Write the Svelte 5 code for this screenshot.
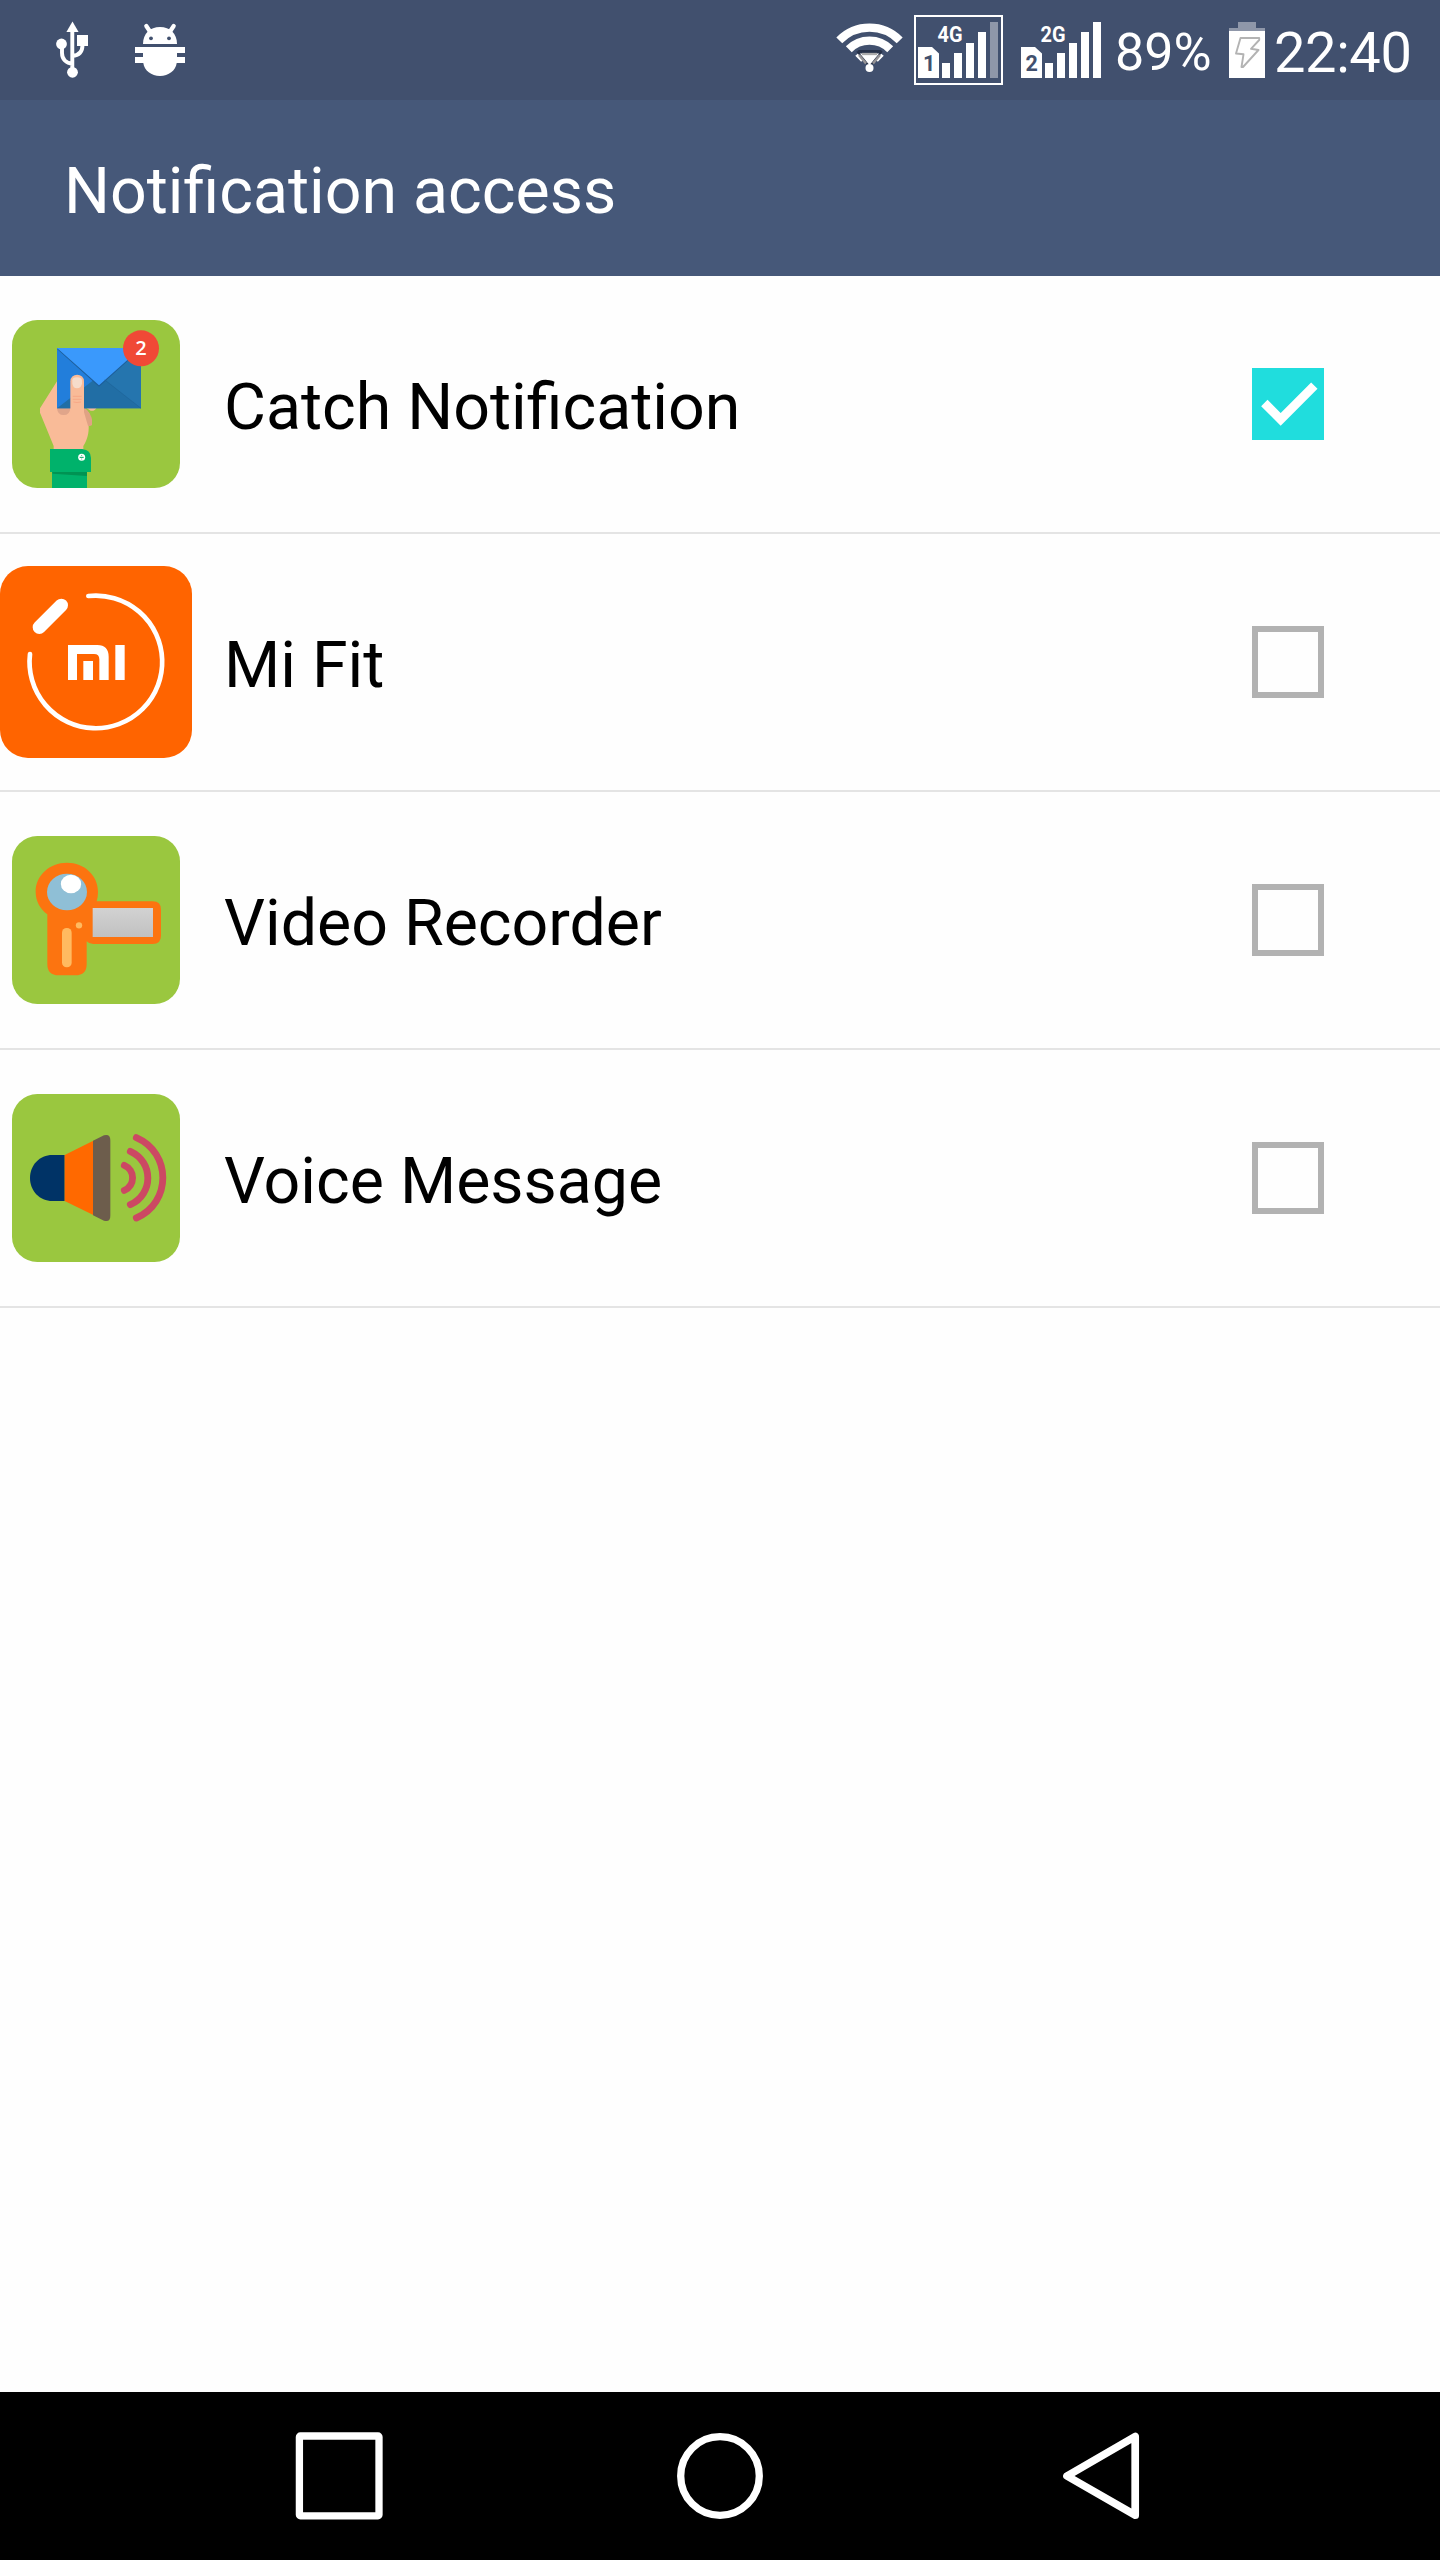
<script>
  let apps = $state([
    { name: 'Catch Notification', icon: 'catch', checked: true },
    { name: 'Mi Fit', icon: 'mi', checked: false },
    { name: 'Video Recorder', icon: 'video', checked: false },
    { name: 'Voice Message', icon: 'voice', checked: false }
  ]);
</script>

{#snippet sim(slot, network, full)}
  <svg class="sim" width="89" height="70" viewBox="0 0 89 70">
    {#if !full}
      <rect x="1" y="1" width="87" height="68" fill="none" stroke="#fff" stroke-width="2" />
    {/if}
    <path d="M4 32H18L25 38.5V63H4Z" fill="#fff" />
    <text x={slot === '1' ? 9 : 8.5} y="55.5" class="slot">{slot}</text>
    <text x="23.5" y="26.5" class="network" textLength="25" lengthAdjust="spacingAndGlyphs">{network}</text>
    <path d="M28 48h8v15h-8zM40 38h8v25h-8zM52 28h8v35h-8zM64 17h8v46h-8z" fill="#fff" />
    <path d="M76 7h8v56h-8z" fill={full ? '#fff' : '#8f97a9'} />
  </svg>
{/snippet}

<div class="screen">
  <div class="status">
    <svg class="usb" width="40" height="64" viewBox="52 18 40 64">
      <path d="M72.5 21.5L78.6 32H66.4Z" fill="#fff" />
      <path d="M72.3 31V72M62 46v7c0 6 4 10.500 10.300 10.500M82.500 45c0 7-3.500 10.500-10.200 11" fill="none" stroke="#fff" stroke-width="3.900" />
      <circle cx="72.500" cy="72.300" r="5.400" fill="#fff" />
      <circle cx="61.500" cy="44" r="5.400" fill="#fff" />
      <path d="M77 35h11v11H77z" fill="#fff" />
    </svg>
    <svg class="bug" width="54" height="64" viewBox="133 18 54 64">
      <path d="M143 44c0-10.500 7-17 17-17s17 6.500 17 17z" fill="#fff" />
      <path d="M146.300 26l5 7.500M173.700 26l-5 7.500" stroke="#fff" stroke-width="4.200" stroke-linecap="round" />
      <circle cx="151" cy="38.300" r="1.900" fill="#41506e" />
      <circle cx="169" cy="38.300" r="1.900" fill="#41506e" />
      <path d="M135 47h50v6h-8v4h8v6h-8.300c-1 7.500-8 13-16.700 13s-15.700-5.500-16.700-13H135v-6h8v-4h-8z" fill="#fff" />
    </svg>
    <div class="spacer"></div>
    <svg class="wifi" width="71" height="52" viewBox="834 22 71 52">
      <g fill="none" stroke="#fff" stroke-width="8.300">
        <path d="M839.300 40.300A42.300 42.300 0 0 1 899.700 40.300" />
        <path d="M848.800 49.300A29.200 29.200 0 0 1 890.200 49.300" />
        <path d="M858.200 58.700A16 16 0 0 1 880.800 58.700" />
      </g>
      <path d="M858 52.500L869.500 66.500L881 52.500Z" fill="#fff" stroke="#28334a" stroke-width="1.800" />
      <path d="M859 51.500H880.500" stroke="#28334a" stroke-width="3" stroke-linecap="round" />
      <path d="M862 54h15" stroke="#aaa" stroke-width="2.300" />
      <path d="M859 55l7 8.500M880 55l-7 8.500" stroke="#969496" stroke-width="2.400" />
      <circle cx="869.500" cy="68" r="4" fill="#fff" />
    </svg>
    {@render sim('1', '4G', false)}
    {@render sim('2', '2G', true)}
    <span class="percent">89%</span>
    <svg class="battery" width="36" height="56" viewBox="0 0 36 56">
      <path d="M9 0h18v6h9v3H0V6h9z" fill="#8f97a9" />
      <path d="M0 9h36v47H0z" fill="#fff" />
      <path d="M11.500 16H30.200V18L22 26.800L29.500 28L14 45H12.500L14.500 32.300L7 31.500Z" fill="none" stroke="#b3b3b3" stroke-width="1.900" stroke-linejoin="round" />
    </svg>
    <span class="clock">22:40</span>
  </div>

  <header>Notification access</header>

  <main>
    {#each apps as app}
      <label class="row">
        <span class="icon">
          {#if app.icon === 'catch'}
            <svg width="168" height="168" viewBox="36 60 504 504">
              <rect x="36" y="60" width="504" height="504" rx="76" fill="#9ac73f" />
              <path d="M171 244L120 325V338L161 438V450H250V438C262 420 267 400 266 376L268 340L250 322L171 322Z" fill="#f9bb98" />
              <path d="M250 322C262 328 272 342 276 358V375Q270 380 264 377L250 330Z" fill="#e0a284" />
              <path d="M258 323H290Q284 334 272 332Z" fill="#f9bb98" />
              <path d="M171 323H211Q210 345 191 345T171 323Z" fill="#e0a58a" />
              <path d="M171 144H423V325H171Z" fill="#2575ae" />
              <path d="M171 325L280 238H314L423 325Z" fill="#216ea5" />
              <path d="M171 144V325L282 239Z" fill="#227edb" />
              <path d="M171 147L297 260L423 147Z" fill="#1d5d99" />
              <path d="M171 144H423L297 256Z" fill="#3a99fc" />
              <path d="M314 240L423 325" stroke="#1e659a" stroke-width="2" />
              <path d="M211 340V244a20.500 20 0 0 1 41 0V340Z" fill="#f9bb98" />
              <path d="M217 241Q217 232 231 232T246 241V250Q244 265 231 265T217 250Z" fill="#f6dccb" />
              <path d="M218 289H245M218 298H245M220 306Q231 309 243 306" fill="none" stroke="#f7a583" stroke-width="2.500" />
              <circle cx="423" cy="145" r="54" fill="#f04936" />
              <text class="badge" x="423" y="165" text-anchor="middle">2</text>
              <path d="M156 510H261V564H156Z" fill="#00b26b" />
              <path d="M156 514H261V528L158 521Z" fill="#009353" />
              <path d="M150 447H247Q273 450 273 474V516H150Z" fill="#00b26b" />
              <circle cx="245" cy="472" r="10.500" fill="#fff" />
              <path d="M239 472h12M245 466v2M245 476v2" stroke="#00a562" stroke-width="3" />
            </svg>
          {:else if app.icon === 'mi'}
            <svg width="192" height="192" viewBox="0 48 576 576">
              <rect x="0" y="48" width="576" height="576" rx="84" fill="#ff6400" />
              <path d="M265 138A199 199 0 1 1 90 312" fill="none" stroke="#fff" stroke-width="14" stroke-linecap="round" />
              <path d="M118 232L184 166" stroke="#fff" stroke-width="40" stroke-linecap="round" />
              <path d="M204 285H292Q326 286 326 320V390H298V328Q298 312 282 312H231V390H204ZM250 333H279V390H250ZM346 285H374V390H346Z" fill="#fff" />
            </svg>
          {:else if app.icon === 'video'}
            <svg width="168" height="168" viewBox="36 48 504 504">
              <defs>
                <linearGradient id="lcd" x1="0" y1="0" x2="0" y2="1">
                  <stop offset="0" stop-color="#d2d2d2" />
                  <stop offset="1" stop-color="#c1c1c1" />
                </linearGradient>
              </defs>
              <rect x="36" y="48" width="504" height="504" rx="76" fill="#9ac73f" />
              <path d="M142 283C120 266 107 243 107 215C107 166 149 128 201 128S294 166 294 215Q294 230 290 244H458Q483 244 483 269V347Q483 372 458 372H280Q267 372 260 364V432Q260 466 226 466H176Q142 466 142 432Z" fill="#fc7410" />
              <ellipse cx="201" cy="216" rx="60" ry="55" fill="#8fbfd6" />
              <ellipse cx="213" cy="192" rx="30.500" ry="28" fill="#fff" />
              <rect x="278" y="264" width="181" height="87" fill="url(#lcd)" />
              <circle cx="237" cy="316" r="9.500" fill="#ffba60" />
              <rect x="186" y="324" width="29" height="118" rx="14" fill="#ffba60" />
            </svg>
          {:else}
            <svg width="168" height="168" viewBox="36 42 504 504">
              <rect x="36" y="42" width="504" height="504" rx="76" fill="#9ac73f" />
              <path d="M194 225H157C119 225 90 255 90 294S119 363 157 363H194Z" fill="#003366" />
              <path d="M194 225L280 182V405L194 363Z" fill="#ff6900" />
              <path d="M279 182.500L312 166Q331 161 331 181V407Q331 428 312 422L279 405.500Z" fill="#6d5d4c" />
              <g fill="none" stroke="#cc4863" stroke-width="20.500" stroke-linecap="round">
                <path d="M373 256C406 270 406 317 373 331" />
                <path d="M391 214C461 246 461 342 391 374" />
                <path d="M409 173C515 219 515 368 409 414" />
              </g>
            </svg>
          {/if}
        </span>
        <span class="name">{app.name}</span>
        <input type="checkbox" bind:checked={app.checked} />
        <span class="box" class:on={app.checked}>
          {#if app.checked}
            <svg width="72" height="72" viewBox="66 54 216 216">
              <path d="M103 159L152 208L253 107" fill="none" stroke="#fff" stroke-width="27" />
            </svg>
          {/if}
        </span>
      </label>
    {/each}
  </main>

  <nav>
    <svg width="90" height="90" viewBox="294 2431 90 90">
      <rect x="299.400" y="2436" width="79.600" height="79.800" rx="1" fill="none" stroke="#fff" stroke-width="7.300" stroke-linejoin="round" />
    </svg>
    <svg width="90" height="90" viewBox="675 2431 90 90">
      <circle cx="720" cy="2476" r="39.300" fill="none" stroke="#fff" stroke-width="7.300" />
    </svg>
    <svg width="90" height="90" viewBox="1056 2431 90 90">
      <path d="M1135.200 2436.500V2515.200L1067 2476Z" fill="none" stroke="#fff" stroke-width="7.700" stroke-linejoin="round" />
    </svg>
  </nav>
</div>

<style>
  :global(body) {
    margin: 0;
    background: #fefefe;
  }
  .screen {
    width: 1440px;
    height: 2560px;
    display: flex;
    flex-direction: column;
    font-family: Roboto, sans-serif;
    background: #fefefe;
    overflow: hidden;
  }
  svg {
    display: block;
    flex: none;
  }
  .status {
    box-sizing: border-box;
    height: 100px;
    flex: none;
    display: flex;
    align-items: center;
    padding: 0 0 0 52px;
    background: #41506e;
    color: #fff;
  }
  .bug {
    margin-left: 41px;
  }
  .spacer {
    flex: 1;
  }
  .wifi {
    margin: 0 9px 4px 0;
  }
  .sim {
    margin-right: 14px;
  }
  .slot {
    font: 700 21.500px Roboto, sans-serif;
    fill: #41506e;
  }
  .network {
    font: 700 22.500px Roboto, sans-serif;
    fill: #fff;
  }
  .percent {
    width: 114px;
    margin-left: -5px;
    padding-top: 5px;
    font-size: 52px;
    white-space: nowrap;
  }
  .battery {
    margin-right: 9px;
  }
  .clock {
    width: 166px;
    padding-top: 6px;
    font-size: 56px;
    letter-spacing: -0.4px;
    white-space: nowrap;
  }
  header {
    box-sizing: border-box;
    height: 176px;
    flex: none;
    display: flex;
    align-items: center;
    padding: 6px 64px 0;
    background: #465879;
    color: #fff;
    font-size: 64.45px;
  }
  main {
    flex: 1;
  }
  .row {
    box-sizing: border-box;
    height: 258px;
    display: flex;
    align-items: center;
    padding-right: 116px;
    border-bottom: 2px solid #e4e4e4;
  }
  .icon {
    width: 192px;
    flex: none;
    display: flex;
    justify-content: center;
  }
  .badge {
    font: 600 60px 'Open Sans', sans-serif;
    fill: #fff;
  }
  .name {
    flex: 1;
    padding: 6px 0 0 32px;
    font-size: 64.45px;
    color: #000;
  }
  input {
    appearance: none;
    width: 0;
    height: 0;
    margin: 0;
  }
  .box {
    box-sizing: border-box;
    width: 72px;
    height: 72px;
    flex: none;
    border: 6px solid #b2b2b2;
  }
  .box.on {
    border: 0;
    background: #20dddd;
  }
  nav {
    height: 168px;
    flex: none;
    display: grid;
    grid-template-columns: repeat(3, 381px);
    justify-content: center;
    justify-items: center;
    align-items: center;
    background: #000;
  }
</style>
